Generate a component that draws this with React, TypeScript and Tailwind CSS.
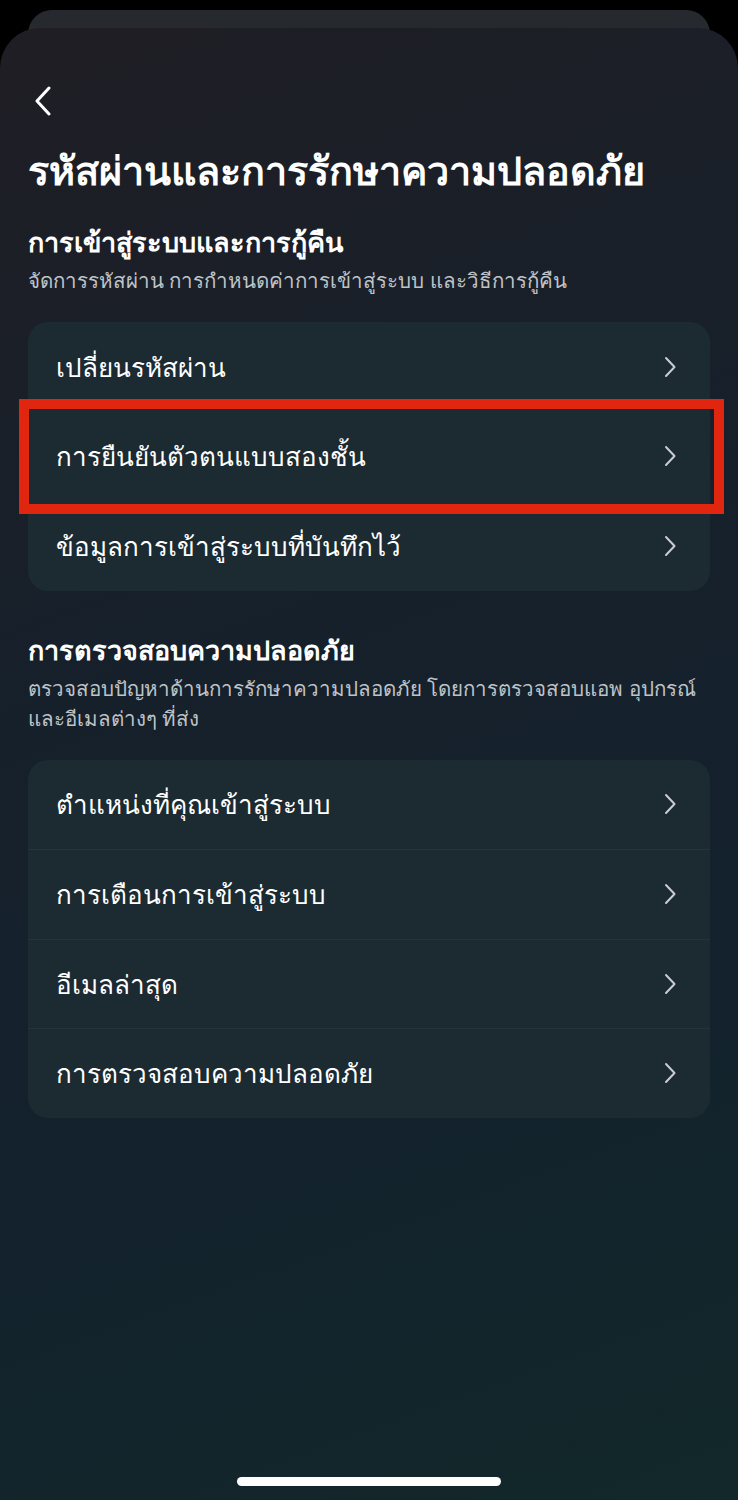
const Chevron = () => (
  <svg width="14" height="24" viewBox="0 0 14 24" fill="none" className="shrink-0">
    <path d="M3 3 L11.5 12 L3 21" stroke="#c9cdd1" strokeWidth="2" strokeLinecap="round" strokeLinejoin="round" />
  </svg>
);

const Row = ({ label, divider }: { label: string; divider?: boolean }) => (
  <div className={`flex items-center justify-between h-[89.5px] pl-7 pr-[33px] ${divider ? "border-t border-[#24343c]" : ""}`}>
    <span className="text-[26px] text-white leading-none">{label}</span>
    <Chevron />
  </div>
);

const Section = ({ title, desc }: { title: string; desc: string }) => (
  <div className="flex flex-col">
    <h2 className="text-[27px] font-bold text-white leading-[32px]">{title}</h2>
    <p className="text-[20.5px] text-[#bfc3c7] leading-[30px] mt-[7px]">{desc}</p>
  </div>
);

export default function App() {
  return (
    <div
      className="w-[738px] h-[1500px] bg-black flex flex-col overflow-hidden"
      style={{ fontFamily: '"Noto Sans", "DejaVu Sans", sans-serif' }}
    >
      <div className="mx-7 mt-[10px] h-[40px] rounded-t-[24px] bg-[#26292d] shrink-0" />
      <div className="-mt-[22px] flex-1 rounded-t-[40px] bg-[linear-gradient(160deg,#1f1e24_0%,#16202b_40%,#13222d_70%,#12282a_100%)] px-7 flex flex-col">
        <div className="pt-[58px] pl-[5px]">
          <svg width="20" height="30" viewBox="0 0 20 30" fill="none">
            <path d="M16 2 L4 15 L16 28" stroke="white" strokeWidth="3" strokeLinecap="round" strokeLinejoin="round" />
          </svg>
        </div>
        <h1 className="mt-[30px] text-[39.5px] font-bold text-white leading-[48px]">รหัสผ่านและการรักษาความปลอดภัย</h1>
        <div className="mt-[32px]">
          <Section title="การเข้าสู่ระบบและการกู้คืน" desc="จัดการรหัสผ่าน การกำหนดค่าการเข้าสู่ระบบ และวิธีการกู้คืน" />
        </div>
        <div className="relative mt-[27px] rounded-[20px] bg-[#1c2a32]">
          <Row label="เปลี่ยนรหัสผ่าน" />
          <Row label="การยืนยันตัวตนแบบสองชั้น" />
          <Row label="ข้อมูลการเข้าสู่ระบบที่บันทึกไว้" />
          <div className="absolute left-[-9px] right-[-14px] top-[77px] h-[115px] border-[10px] border-[#e0260e]" />
        </div>
        <div className="mt-[43px]">
          <Section
            title="การตรวจสอบความปลอดภัย"
            desc="ตรวจสอบปัญหาด้านการรักษาความปลอดภัย โดยการตรวจสอบแอพ อุปกรณ์ และอีเมลต่างๆ ที่ส่ง"
          />
        </div>
        <div className="mt-[27px] rounded-[20px] bg-[#1c2a32]">
          <Row label="ตำแหน่งที่คุณเข้าสู่ระบบ" />
          <Row label="การเตือนการเข้าสู่ระบบ" divider />
          <Row label="อีเมลล่าสุด" divider />
          <Row label="การตรวจสอบความปลอดภัย" divider />
        </div>
        <div className="flex-1" />
        <div className="flex justify-center pb-[14px]">
          <div className="w-[264px] h-[9px] rounded-full bg-white" />
        </div>
      </div>
    </div>
  );
}
